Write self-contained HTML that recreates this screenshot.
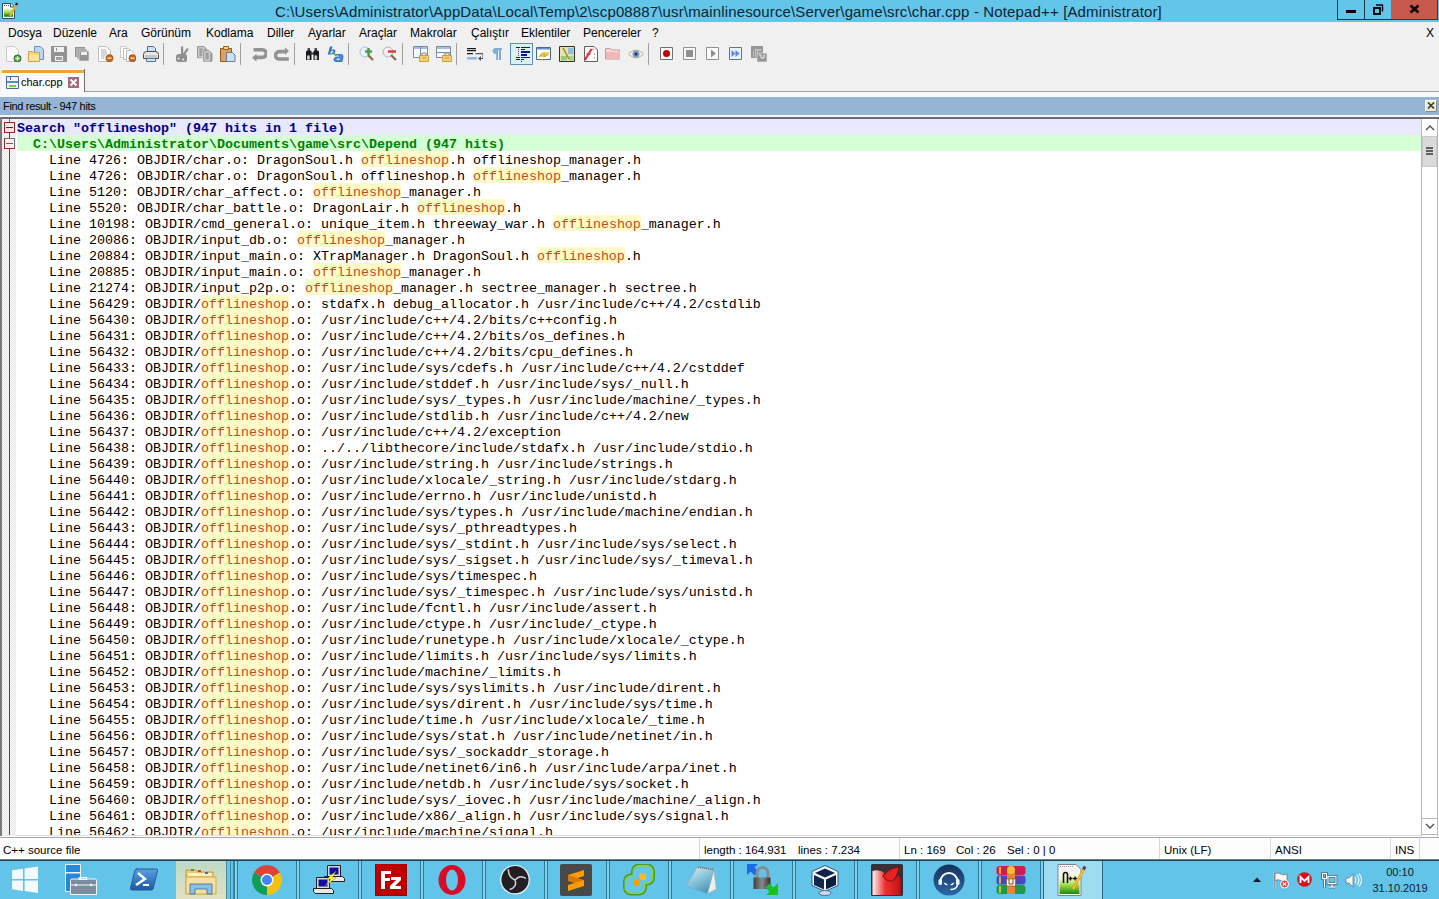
<!DOCTYPE html>
<html><head><meta charset="utf-8">
<style>
*{box-sizing:border-box}
html,body{margin:0;padding:0;width:1439px;height:899px;overflow:hidden;background:#f0f0f0;font-family:"Liberation Sans",sans-serif}
.a{position:absolute}
#title{left:0;top:0;width:1439px;height:22px;background:#63c6e9}
#ttext{left:275px;top:3px;font-size:15px;color:#0d2433;white-space:pre;letter-spacing:0.14px}
.menu{top:26px;font-size:12px;color:#000;white-space:pre}
#menubar{left:0;top:22px;width:1439px;height:21px;background:#f0f0f0}
.sep{width:1px;height:22px;top:43px;background:#a0a0a0}
.ic{top:46px;width:16px;height:16px}
#tabbar{left:0;top:66px;width:1439px;height:31px;background:#f0f0f0}
#findbar{left:0;top:97px;width:1439px;height:18px;background:#96b4d3}
#content{left:0;top:117px;width:1439px;height:720px;background:#fff;overflow:hidden}
#margin{left:2px;top:2px;width:14px;height:717px;background-color:#fafafa;background-image:linear-gradient(45deg,#e6e6e6 25%,transparent 25%,transparent 75%,#e6e6e6 75%),linear-gradient(45deg,#e6e6e6 25%,transparent 25%,transparent 75%,#e6e6e6 75%);background-size:2px 2px;background-position:0 0,1px 1px}
.ln{position:absolute;left:17px;height:16px;padding-top:2px;width:1404px;font-family:"Liberation Mono",monospace;font-size:13.333px;line-height:16px;white-space:pre;color:#000}
.hl{color:#c44a1c}
.hlb{width:88px;height:16px;background:#fffac6}
.sr{background:#e8e8ff;color:#000080;font-weight:bold}
.fl{background:#d5ffd5;color:#008000;font-weight:bold}
#status{left:0;top:836px;width:1439px;height:23px;background:#fdfdfd}
.st{top:844px;font-size:11.5px;color:#000;white-space:pre}
.ssep{top:838px;width:1px;height:21px;background:#d8d8d8}
#taskbar{left:0;top:859px;width:1439px;height:40px;background:#62c4e8;border-top:2px solid #24404e;border-top-color:#24404e}
.tb{top:860px;width:1px;height:39px;background:#8fd6ee}
</style></head><body>
<!-- Title bar -->
<div id="title" class="a"></div>
<div id="ttext" class="a">C:\Users\Administrator\AppData\Local\Temp\2\scp08887\usr\mainlinesource\Server\game\src\char.cpp - Notepad++ [Administrator]</div>

<svg class="a" style="left:0;top:0" width="22" height="22" viewBox="0 0 22 22"><defs><linearGradient id="tg" x1="0" y1="0" x2="0" y2="1"><stop offset="0" stop-color="#f0f8d8"/><stop offset=".5" stop-color="#9ad840"/><stop offset="1" stop-color="#106010"/></linearGradient></defs><path d="M2.5 3.5h8.5l3.5 3.5v11.5h-12z" fill="#fafcff" stroke="#304a60"/><path d="M4 8.5h9v8.2h-9z" fill="url(#tg)"/><path d="M4 5h1v1h-1zM6 5h1v1h-1zM8 5h1v1h-1z" fill="#505a60"/><path d="M10.5 3.5v3.5h3.5" fill="#fff" stroke="#304a60"/><path d="M10 16l6.5-11.5" stroke="#e0b030" stroke-width="2.4"/><path d="M16 5l1.2-2" stroke="#101830" stroke-width="2.4"/></svg>
<div class="a" style="left:1337px;top:0;width:28px;height:20px;border:1px solid #1a3a4a;border-top:0;background:#63c6e9"></div>
<div class="a" style="left:1346px;top:10px;width:10px;height:3px;background:#000"></div>
<div class="a" style="left:1365px;top:0;width:27px;height:20px;border:1px solid #1a3a4a;border-top:0;border-left:0;background:#63c6e9"></div>
<svg class="a" style="left:1373px;top:4px" width="11" height="11" viewBox="0 0 11 11"><path d="M3 1h6.5v6.5" fill="none" stroke="#000814" stroke-width="1.4"/><path d="M1 4h6v6h-6z" fill="none" stroke="#000814" stroke-width="2"/></svg>
<div class="a" style="left:1391px;top:0;width:47px;height:20px;border:1px solid #4a3030;border-top:0;border-left:0;background:#c75a4d"></div>
<svg class="a" style="left:1409px;top:4px" width="11" height="10" viewBox="0 0 11 10"><path d="M1.5 1.5l8 7M9.5 1.5l-8 7" stroke="#140808" stroke-width="2.8"/></svg>

<!-- Menubar -->
<div class="a menu" style="left:8px">Dosya</div>
<div class="a menu" style="left:53px">Düzenle</div>
<div class="a menu" style="left:109px">Ara</div>
<div class="a menu" style="left:141px">Görünüm</div>
<div class="a menu" style="left:206px">Kodlama</div>
<div class="a menu" style="left:267px">Diller</div>
<div class="a menu" style="left:308px">Ayarlar</div>
<div class="a menu" style="left:359px">Araçlar</div>
<div class="a menu" style="left:410px">Makrolar</div>
<div class="a menu" style="left:471px">Çalıştır</div>
<div class="a menu" style="left:521px">Eklentiler</div>
<div class="a menu" style="left:583px">Pencereler</div>
<div class="a menu" style="left:652px">?</div>
<div class="a menu" style="left:1426px">X</div>

<!-- TOOLBAR -->
<div class="a" style="left:510px;top:43px;width:23px;height:22px;background:#dcf0fb;border:1px solid #5a90b8"></div>
<svg class="a" style="left:6px;top:46px" width="16" height="16" viewBox="0 0 16 16"><path d="M0.5 0.5h8l4 4v11h-12z" fill="#fbfbfb" stroke="#c8c8c8"/><circle cx="11.5" cy="12.5" r="3.5" fill="#4f9a4a" stroke="#2f6a2a"/><path d="M11.5 10.2v4.6M9.2 12.5h4.6" stroke="#d8f0d0" stroke-width="1.4"/></svg>
<svg class="a" style="left:28px;top:46px" width="16" height="16" viewBox="0 0 16 16"><path d="M6.5 0.5h6l3 3v10h-9z" fill="#b9d8f8" stroke="#6a8cb8"/><path d="M0.5 5.5h4l1 1h6v9h-11z" fill="#f6d77a" stroke="#c8a050"/><path d="M1 9h10v6h-10z" fill="#fae39a"/></svg>
<svg class="a" style="left:51px;top:46px" width="16" height="16" viewBox="0 0 16 16"><path d="M0 0h16v16h-16z" fill="#939393"/><path d="M3 1h10v5h-10z" fill="#f2f2f2"/><path d="M5 2h1v3h-1z" fill="#939393"/><path d="M4 10h8v5h-8z" fill="#f0f0f0"/><path d="M5 11h6v3h-6z" fill="#a0a0a0"/></svg>
<svg class="a" style="left:75px;top:46px" width="16" height="16" viewBox="0 0 16 16"><path d="M0 1h10v10h-10z" fill="#939393"/><path d="M2 3h10v10h-10z" fill="#939393" stroke="#f0f0f0" stroke-width=".6"/><path d="M4 5h10v10h-10z" fill="#939393" stroke="#f0f0f0" stroke-width=".6"/><path d="M6 6h6v3h-6z" fill="#f2f2f2"/></svg>
<svg class="a" style="left:98px;top:46px" width="16" height="16" viewBox="0 0 16 16"><path d="M0.5 0.5h8l4 4v11h-12z" fill="#fdfdfd" stroke="#bdbdbd"/><path d="M3 4h5M3 6h6M3 8h6M3 10h4M3 12h3" stroke="#9a9a9a" stroke-width=".8"/><circle cx="11.5" cy="12.2" r="3.6" fill="#c4661c" stroke="#9a4a10" stroke-width=".6"/><path d="M9.5 12.2h4" stroke="#ffe0a0" stroke-width="1.5"/></svg>
<svg class="a" style="left:120px;top:46px" width="16" height="16" viewBox="0 0 16 16"><path d="M0.5 0.5h5l2 2v9h-7z" fill="#fdfdfd" stroke="#c8c8c8"/><path d="M3.5 2.5h5l2 2v9h-7z" fill="#fdfdfd" stroke="#c0c0c0"/><path d="M6.5 4.5h5l3 3v8h-8z" fill="#fdfdfd" stroke="#bbbbbb"/><circle cx="12.5" cy="12.2" r="3.6" fill="#c4661c" stroke="#9a4a10" stroke-width=".6"/><path d="M10.5 12.2h4" stroke="#ffe0a0" stroke-width="1.5"/></svg>
<svg class="a" style="left:143px;top:46px" width="16" height="16" viewBox="0 0 16 16"><path d="M4.5 0.5h6l2 2v5h-8z" fill="#c8e0f8" stroke="#5a6c80"/><path d="M0.5 8.5q0-3 3-3h9q3 0 3 3v4h-15z" fill="#e8e8e8" stroke="#4a4a4a"/><path d="M2 9h12v3h-12z" fill="#c8c8c8"/><path d="M3.5 12.5h9v3h-9z" fill="#c8e8f8" stroke="#5a7890"/></svg>
<svg class="a" style="left:175px;top:46px" width="16" height="16" viewBox="0 0 16 16"><path d="M6 0.5h2.2v8h-2.2z" fill="#8f8f8f"/><path d="M12 2l1.8 1.2-5.5 7.5-1.6-1.2z" fill="#8f8f8f"/><path d="M1 11q0-3 3-3h6q2 0 2 3v3q0 2-2 2h-7q-2 0-2-2z" fill="#8f8f8f"/><circle cx="3.6" cy="12.6" r="1" fill="#f0f0f0"/><circle cx="8.2" cy="13.6" r="1" fill="#f0f0f0"/></svg>
<svg class="a" style="left:197px;top:46px" width="16" height="16" viewBox="0 0 16 16"><path d="M0.5 0.5h6.5l3 3v8.2h-9.5z" fill="#a4a4a4" stroke="#9a9a9a"/><path d="M1.8 1.8h5v9h-5z" fill="#a0a0a0" stroke="#f4f4f4" stroke-width=".7"/><path d="M5.5 4h6.5l3.5 3.5v8.2h-10z" fill="#f4f4f4"/><path d="M6.5 4.5h5.5l3 3v7.7h-8.5z" fill="#a4a4a4" stroke="#9a9a9a"/><path d="M7.8 5.8h4.5v8.4h-4.5z" fill="#a0a0a0" stroke="#f4f4f4" stroke-width=".7"/></svg>
<svg class="a" style="left:220px;top:46px" width="16" height="16" viewBox="0 0 16 16"><path d="M0.5 2.5h11v13h-11z" fill="#e0a060" stroke="#8a5a20"/><path d="M3.5 0.5h5v3h-5z" fill="#f8d070" stroke="#8a6a20"/><path d="M6.5 6.5h6l2.5 2.5v6.5h-8.5z" fill="#c8e0f8" stroke="#6a7e98"/></svg>
<svg class="a" style="left:251px;top:46px" width="16" height="16" viewBox="0 0 16 16"><path d="M2.5 3.8H11.5A3.8 3.8 0 0 1 11.5 11.4H4.5" fill="none" stroke="#939393" stroke-width="3.6"/><path d="M1 11.8l4.5-4v8z" fill="#939393"/></svg>
<svg class="a" style="left:274px;top:46px" width="16" height="16" viewBox="0 0 16 16"><path d="M11.5 5.6H5.2A3.7 3.7 0 0 0 5.2 13H14.8" fill="none" stroke="#939393" stroke-width="3.6"/><path d="M15 5l-4-3.8v7.6z" fill="#939393"/></svg>
<svg class="a" style="left:305px;top:46px" width="16" height="16" viewBox="0 0 16 16"><path d="M2.5 2h2.5v3.5h-2.5zM9.5 2h2.5v3.5h-2.5z" fill="#4a4a50"/><path d="M1 6q0-1.5 1.5-1.5h3q1 0 1 1v8.5h-5.5z M8.5 5.5q0-1 1-1h3q1.5 0 1.5 1.5v8h-5.5z" fill="#18181c"/><path d="M5 6.5h4v2h-4z" fill="#30303a"/><path d="M2 9.5h2.8v4h-2.8zM9.5 9.5h2.8v4h-2.8z" fill="#b8b8b8"/><path d="M3.2 9.5v4M10.7 9.5v4" stroke="#e8e8e8" stroke-width=".8"/></svg>
<svg class="a" style="left:328px;top:46px" width="16" height="16" viewBox="0 0 16 16"><path d="M2 0.5h2.5l-1 3.5q2-1.5 3.3-.3t-.3 3.3q-1.5 1.5-3.8 1.5h-3z" fill="#3a70c0"/><path d="M3 5l-.8 2.6q1.8.2 2.8-.8t.5-1.8-2.5 0z" fill="#c8e8f8"/><path d="M4.5 6l4 4" stroke="#50a040" stroke-width="1.6"/><path d="M8 8.5h5q2.5 0 2 2.5l-1 4.5h-6q-2.5 0-2-2.5q.5-2 3-2h3" fill="#4a88d8" stroke="#2a68b8" stroke-width=".8"/><path d="M9 12.5h3l-.5 1.5h-3z" fill="#d0ecfc"/></svg>
<svg class="a" style="left:359px;top:46px" width="16" height="16" viewBox="0 0 16 16"><circle cx="6" cy="6" r="5" fill="#e8f2fa" stroke="#a8c0d8"/><path d="M9 9l5 5" stroke="#8a6a40" stroke-width="2.2"/><path d="M9.5 2v7M6 5.5h7" stroke="#4aa040" stroke-width="2.5"/></svg>
<svg class="a" style="left:382px;top:46px" width="16" height="16" viewBox="0 0 16 16"><circle cx="6" cy="6" r="5" fill="#f2eef2" stroke="#c0b0c0"/><path d="M9 9l5 5" stroke="#8a6a40" stroke-width="2.2"/><path d="M6 5.5h8" stroke="#d84040" stroke-width="2.5"/></svg>
<svg class="a" style="left:413px;top:46px" width="16" height="16" viewBox="0 0 16 16"><path d="M0.5 0.5h14v11h-14z" fill="#f8fbff" stroke="#7a8aa0"/><path d="M1 1h13v2h-13z" fill="#a8c0e0"/><path d="M7.5 1v10" stroke="#7a8aa0"/><path d="M8.5 9.5a2.5 2.5 0 0 1 5 0" fill="none" stroke="#a8a8a8" stroke-width="1.6"/><path d="M6.5 9.5h9v6h-9z" fill="#f4d070" stroke="#c8a040"/><path d="M9 12h4" stroke="#b89030" stroke-width=".8"/></svg>
<svg class="a" style="left:436px;top:46px" width="16" height="16" viewBox="0 0 16 16"><path d="M0.5 0.5h14v11h-14z" fill="#f8fbff" stroke="#7a8aa0"/><path d="M1 1h13v2h-13z" fill="#a8c0e0"/><path d="M1 6.5h13" stroke="#7a8aa0"/><path d="M8.5 9.5a2.5 2.5 0 0 1 5 0" fill="none" stroke="#a8a8a8" stroke-width="1.6"/><path d="M6.5 9.5h9v6h-9z" fill="#f4d070" stroke="#c8a040"/><path d="M9 12h4" stroke="#b89030" stroke-width=".8"/></svg>
<svg class="a" style="left:467px;top:46px" width="16" height="16" viewBox="0 0 16 16"><path d="M0 2h9v1.2h-9zM0 4h9v1.2h-9zM0 7h6v1.2h-6z" fill="#1a1a1a"/><path d="M8.5 7.6h7.5v4.9h-3" fill="none" stroke="#505868" stroke-width="1.1"/><path d="M11 12.5l3-2.6v5.2z" fill="#505868"/><path d="M0 11h10v2.6h-10z" fill="#90b8e0"/></svg>
<svg class="a" style="left:489px;top:46px" width="16" height="16" viewBox="0 0 16 16"><path d="M7.5 2h5.5v2h-1v10h-2v-10h-1v10h-1.8v-6a3 3 0 0 1 -1-6z" fill="#80acd8"/></svg>
<svg class="a" style="left:511px;top:44px" width="21" height="20" viewBox="0 0 21 20"><path d="M5 3h4v1h-4zM10 3h9v1h-9zM10 5h4v1h-4zM10 7h9v2h-9zM10 10h6v2h-6zM5 13h4v1h-4zM10 13h9v1h-9zM5 15h4v1h-4zM10 15h3v1h-3zM10 17h1v1h-1z" fill="#0a1888"/><path d="M7 5h1v1h-1zM7 7h1v1h-1zM7 9h1v1h-1zM7 11h1v1h-1z" fill="#8a3a60"/></svg>
<svg class="a" style="left:536px;top:46px" width="16" height="16" viewBox="0 0 16 16"><path d="M0.5 1.5h14v12h-14z" fill="#fdfdfd" stroke="#4a6890"/><path d="M1 2h13v1.5h-13z" fill="#6a90c8"/><path d="M2 11l4-5h8l-4 5z" fill="#ecd060"/><path d="M4 10l5-2 -1 3 5-3" fill="none" stroke="#c8a030" stroke-width=".8"/><path d="M6 13l1 2" stroke="#d8b040"/></svg>
<svg class="a" style="left:559px;top:46px" width="16" height="16" viewBox="0 0 16 16"><path d="M0.5 0.5h15v15h-15z" fill="#dfe8a8" stroke="#303030"/><path d="M9 2h5.5v6h-5.5z" fill="#90c0d8"/><path d="M2 10h6v4.5h-6z" fill="#98c878"/><path d="M10 10h4.5v4.5h-4.5z" fill="#a8d088"/><path d="M4 2l6 11" stroke="#b87838" stroke-width="1.5"/></svg>
<svg class="a" style="left:584px;top:46px" width="16" height="16" viewBox="0 0 16 16"><path d="M0.5 0.5h9.5l3.5 3.5v11.5h-13z" fill="#fdfdfd" stroke="#606060"/><path d="M7.5 3l-6.5 11" stroke="#d03848" stroke-width="2.2"/><path d="M2.5 8h4" stroke="#d03848" stroke-width="1.5"/><path d="M8.5 3.2q1-.6 1.5.5" stroke="#d03848" fill="none"/><path d="M10.5 7.5v1.5M10.5 11v1.5" stroke="#909090"/></svg>
<svg class="a" style="left:605px;top:46px" width="16" height="16" viewBox="0 0 16 16"><path d="M0.5 2.5h5l1 1.5h8v9h-14z" fill="#f8d8d8" stroke="#d09898"/><path d="M1 6h14v7h-14z" fill="#f0b8b8"/></svg>
<svg class="a" style="left:628px;top:46px" width="16" height="16" viewBox="0 0 16 16"><path d="M0.5 8q7.5-8 15 0q-7.5 8-15 0z" fill="#f4f4f4" stroke="#c0b090"/><circle cx="8" cy="8" r="3.5" fill="#7a9cc8"/><circle cx="8" cy="8" r="1.5" fill="#203050"/></svg>
<svg class="a" style="left:659px;top:46px" width="16" height="16" viewBox="0 0 16 16"><path d="M1.5 1.5h12v12h-12z" fill="#fafafa" stroke="#707070"/><circle cx="7.5" cy="7.5" r="3.5" fill="#c00000"/></svg>
<svg class="a" style="left:682px;top:46px" width="16" height="16" viewBox="0 0 16 16"><path d="M1.5 1.5h12v12h-12z" fill="#fafafa" stroke="#909090"/><path d="M4 4h7v7h-7z" fill="#909090"/></svg>
<svg class="a" style="left:705px;top:46px" width="16" height="16" viewBox="0 0 16 16"><path d="M1.5 1.5h12v12h-12z" fill="#fafafa" stroke="#909090"/><path d="M6 3.5l5 4-5 4z" fill="#909090"/></svg>
<svg class="a" style="left:728px;top:46px" width="16" height="16" viewBox="0 0 16 16"><path d="M1.5 1.5h12v12h-12z" fill="#e8f2fc" stroke="#707080"/><path d="M3.5 4l4 3.5-4 3.5zM7.5 4l4 3.5-4 3.5z" fill="#5a8ad8"/></svg>
<svg class="a" style="left:751px;top:46px" width="16" height="16" viewBox="0 0 16 16"><path d="M0 0h12v12h-12z" fill="#969696"/><path d="M3.5 4h7M2 6h1M4 6h1M6 6h1M2 8h1M4 8h1M2 10h1M4 10h1" stroke="#e8e8e8"/><path d="M6 7h10v9h-10z" fill="#969696" stroke="#f0f0f0" stroke-width=".6"/><path d="M8 9h2v3h3M14 9h-1v3" stroke="#f0f0f0" fill="none"/></svg>
<div class="a" style="left:163px;top:43px;width:1px;height:22px;background:#a0a0a0"></div>
<div class="a" style="left:240px;top:43px;width:1px;height:22px;background:#a0a0a0"></div>
<div class="a" style="left:294px;top:43px;width:1px;height:22px;background:#a0a0a0"></div>
<div class="a" style="left:348px;top:43px;width:1px;height:22px;background:#a0a0a0"></div>
<div class="a" style="left:402px;top:43px;width:1px;height:22px;background:#a0a0a0"></div>
<div class="a" style="left:456px;top:43px;width:1px;height:22px;background:#a0a0a0"></div>
<div class="a" style="left:648px;top:43px;width:1px;height:22px;background:#a0a0a0"></div>

<!-- Tab bar -->
<div class="a" style="left:85px;top:91px;width:1354px;height:1px;background:#a0a0a0"></div>
<div class="a" style="left:1px;top:69px;width:84px;height:23px;background:#fafafa;border-right:1px solid #707070"></div>
<div class="a" style="left:2px;top:70px;width:82px;height:3px;background:#f2a23a"></div>
<div class="a" style="left:0;top:92px;width:1439px;height:5px;background:#f8f9fb"></div>
<svg class="a" style="left:6px;top:76px" width="13" height="13" viewBox="0 0 13 13"><path d="M0.5 0.5h12v12h-12z" fill="#f0f6fc" stroke="#4a6c9c"/><path d="M1 5h11v2h-11z" fill="#5a8ac8"/><path d="M3 9h7v2h-7z" fill="#8ac060"/><path d="M4 1h1v3h-1z" fill="#4a6c9c"/></svg>
<div class="a" style="left:21px;top:76px;font-size:11px;color:#000;white-space:pre">char.cpp</div>
<svg class="a" style="left:68px;top:77px" width="11" height="11" viewBox="0 0 11 11"><path d="M0 0h11v11h-11z" fill="#a46a7c"/><path d="M2.5 2.5l6 6M8.5 2.5l-6 6" stroke="#fff" stroke-width="1.8"/></svg>


<!-- Find result bar -->
<div id="findbar" class="a"></div>
<div class="a" style="left:3px;top:100px;font-size:11px;letter-spacing:-0.33px;color:#000;white-space:pre">Find result - 947 hits</div>

<div class="a" style="left:1425px;top:100px;width:12px;height:12px;background:#ece9d8;border:1px solid #fff;border-right-color:#8a8a80;border-bottom-color:#8a8a80"></div>
<svg class="a" style="left:1427px;top:102px" width="8" height="7" viewBox="0 0 8 7"><path d="M1 0.5l6 6M7 0.5l-6 6" stroke="#3a3a28" stroke-width="1.6"/></svg>
<div class="a" style="left:0;top:115px;width:1439px;height:2px;background:#f8f8f8"></div>

<!-- Content -->
<div id="content" class="a">
<div class="a" style="left:0;top:0;width:1439px;height:2px;background:#6a6a74"></div>
<div class="a" style="left:0;top:0;width:2px;height:720px;background:#7a7a7a"></div>
<div id="margin" class="a"></div>
<div class="ln sr" style="top:2px">Search "offlineshop" (947 hits in 1 file)</div>
<div class="ln fl" style="top:18px">  C:\Users\Administrator\Documents\game\src\Depend (947 hits)</div>
<div class="a hlb" style="left:361px;top:34px"></div>
<div class="ln" style="top:34px">    Line 4726: OBJDIR/char.o: DragonSoul.h <span class="hl">offlineshop</span>.h offlineshop_manager.h</div>
<div class="a hlb" style="left:473px;top:50px"></div>
<div class="ln" style="top:50px">    Line 4726: OBJDIR/char.o: DragonSoul.h offlineshop.h <span class="hl">offlineshop</span>_manager.h</div>
<div class="a hlb" style="left:313px;top:66px"></div>
<div class="ln" style="top:66px">    Line 5120: OBJDIR/char_affect.o: <span class="hl">offlineshop</span>_manager.h</div>
<div class="a hlb" style="left:417px;top:82px"></div>
<div class="ln" style="top:82px">    Line 5520: OBJDIR/char_battle.o: DragonLair.h <span class="hl">offlineshop</span>.h</div>
<div class="a hlb" style="left:553px;top:98px"></div>
<div class="ln" style="top:98px">    Line 10198: OBJDIR/cmd_general.o: unique_item.h threeway_war.h <span class="hl">offlineshop</span>_manager.h</div>
<div class="a hlb" style="left:297px;top:114px"></div>
<div class="ln" style="top:114px">    Line 20086: OBJDIR/input_db.o: <span class="hl">offlineshop</span>_manager.h</div>
<div class="a hlb" style="left:537px;top:130px"></div>
<div class="ln" style="top:130px">    Line 20884: OBJDIR/input_main.o: XTrapManager.h DragonSoul.h <span class="hl">offlineshop</span>.h</div>
<div class="a hlb" style="left:313px;top:146px"></div>
<div class="ln" style="top:146px">    Line 20885: OBJDIR/input_main.o: <span class="hl">offlineshop</span>_manager.h</div>
<div class="a hlb" style="left:305px;top:162px"></div>
<div class="ln" style="top:162px">    Line 21274: OBJDIR/input_p2p.o: <span class="hl">offlineshop</span>_manager.h sectree_manager.h sectree.h</div>
<div class="a hlb" style="left:201px;top:178px"></div>
<div class="ln" style="top:178px">    Line 56429: OBJDIR/<span class="hl">offlineshop</span>.o: stdafx.h debug_allocator.h /usr/include/c++/4.2/cstdlib</div>
<div class="a hlb" style="left:201px;top:194px"></div>
<div class="ln" style="top:194px">    Line 56430: OBJDIR/<span class="hl">offlineshop</span>.o: /usr/include/c++/4.2/bits/c++config.h</div>
<div class="a hlb" style="left:201px;top:210px"></div>
<div class="ln" style="top:210px">    Line 56431: OBJDIR/<span class="hl">offlineshop</span>.o: /usr/include/c++/4.2/bits/os_defines.h</div>
<div class="a hlb" style="left:201px;top:226px"></div>
<div class="ln" style="top:226px">    Line 56432: OBJDIR/<span class="hl">offlineshop</span>.o: /usr/include/c++/4.2/bits/cpu_defines.h</div>
<div class="a hlb" style="left:201px;top:242px"></div>
<div class="ln" style="top:242px">    Line 56433: OBJDIR/<span class="hl">offlineshop</span>.o: /usr/include/sys/cdefs.h /usr/include/c++/4.2/cstddef</div>
<div class="a hlb" style="left:201px;top:258px"></div>
<div class="ln" style="top:258px">    Line 56434: OBJDIR/<span class="hl">offlineshop</span>.o: /usr/include/stddef.h /usr/include/sys/_null.h</div>
<div class="a hlb" style="left:201px;top:274px"></div>
<div class="ln" style="top:274px">    Line 56435: OBJDIR/<span class="hl">offlineshop</span>.o: /usr/include/sys/_types.h /usr/include/machine/_types.h</div>
<div class="a hlb" style="left:201px;top:290px"></div>
<div class="ln" style="top:290px">    Line 56436: OBJDIR/<span class="hl">offlineshop</span>.o: /usr/include/stdlib.h /usr/include/c++/4.2/new</div>
<div class="a hlb" style="left:201px;top:306px"></div>
<div class="ln" style="top:306px">    Line 56437: OBJDIR/<span class="hl">offlineshop</span>.o: /usr/include/c++/4.2/exception</div>
<div class="a hlb" style="left:201px;top:322px"></div>
<div class="ln" style="top:322px">    Line 56438: OBJDIR/<span class="hl">offlineshop</span>.o: ../../libthecore/include/stdafx.h /usr/include/stdio.h</div>
<div class="a hlb" style="left:201px;top:338px"></div>
<div class="ln" style="top:338px">    Line 56439: OBJDIR/<span class="hl">offlineshop</span>.o: /usr/include/string.h /usr/include/strings.h</div>
<div class="a hlb" style="left:201px;top:354px"></div>
<div class="ln" style="top:354px">    Line 56440: OBJDIR/<span class="hl">offlineshop</span>.o: /usr/include/xlocale/_string.h /usr/include/stdarg.h</div>
<div class="a hlb" style="left:201px;top:370px"></div>
<div class="ln" style="top:370px">    Line 56441: OBJDIR/<span class="hl">offlineshop</span>.o: /usr/include/errno.h /usr/include/unistd.h</div>
<div class="a hlb" style="left:201px;top:386px"></div>
<div class="ln" style="top:386px">    Line 56442: OBJDIR/<span class="hl">offlineshop</span>.o: /usr/include/sys/types.h /usr/include/machine/endian.h</div>
<div class="a hlb" style="left:201px;top:402px"></div>
<div class="ln" style="top:402px">    Line 56443: OBJDIR/<span class="hl">offlineshop</span>.o: /usr/include/sys/_pthreadtypes.h</div>
<div class="a hlb" style="left:201px;top:418px"></div>
<div class="ln" style="top:418px">    Line 56444: OBJDIR/<span class="hl">offlineshop</span>.o: /usr/include/sys/_stdint.h /usr/include/sys/select.h</div>
<div class="a hlb" style="left:201px;top:434px"></div>
<div class="ln" style="top:434px">    Line 56445: OBJDIR/<span class="hl">offlineshop</span>.o: /usr/include/sys/_sigset.h /usr/include/sys/_timeval.h</div>
<div class="a hlb" style="left:201px;top:450px"></div>
<div class="ln" style="top:450px">    Line 56446: OBJDIR/<span class="hl">offlineshop</span>.o: /usr/include/sys/timespec.h</div>
<div class="a hlb" style="left:201px;top:466px"></div>
<div class="ln" style="top:466px">    Line 56447: OBJDIR/<span class="hl">offlineshop</span>.o: /usr/include/sys/_timespec.h /usr/include/sys/unistd.h</div>
<div class="a hlb" style="left:201px;top:482px"></div>
<div class="ln" style="top:482px">    Line 56448: OBJDIR/<span class="hl">offlineshop</span>.o: /usr/include/fcntl.h /usr/include/assert.h</div>
<div class="a hlb" style="left:201px;top:498px"></div>
<div class="ln" style="top:498px">    Line 56449: OBJDIR/<span class="hl">offlineshop</span>.o: /usr/include/ctype.h /usr/include/_ctype.h</div>
<div class="a hlb" style="left:201px;top:514px"></div>
<div class="ln" style="top:514px">    Line 56450: OBJDIR/<span class="hl">offlineshop</span>.o: /usr/include/runetype.h /usr/include/xlocale/_ctype.h</div>
<div class="a hlb" style="left:201px;top:530px"></div>
<div class="ln" style="top:530px">    Line 56451: OBJDIR/<span class="hl">offlineshop</span>.o: /usr/include/limits.h /usr/include/sys/limits.h</div>
<div class="a hlb" style="left:201px;top:546px"></div>
<div class="ln" style="top:546px">    Line 56452: OBJDIR/<span class="hl">offlineshop</span>.o: /usr/include/machine/_limits.h</div>
<div class="a hlb" style="left:201px;top:562px"></div>
<div class="ln" style="top:562px">    Line 56453: OBJDIR/<span class="hl">offlineshop</span>.o: /usr/include/sys/syslimits.h /usr/include/dirent.h</div>
<div class="a hlb" style="left:201px;top:578px"></div>
<div class="ln" style="top:578px">    Line 56454: OBJDIR/<span class="hl">offlineshop</span>.o: /usr/include/sys/dirent.h /usr/include/sys/time.h</div>
<div class="a hlb" style="left:201px;top:594px"></div>
<div class="ln" style="top:594px">    Line 56455: OBJDIR/<span class="hl">offlineshop</span>.o: /usr/include/time.h /usr/include/xlocale/_time.h</div>
<div class="a hlb" style="left:201px;top:610px"></div>
<div class="ln" style="top:610px">    Line 56456: OBJDIR/<span class="hl">offlineshop</span>.o: /usr/include/sys/stat.h /usr/include/netinet/in.h</div>
<div class="a hlb" style="left:201px;top:626px"></div>
<div class="ln" style="top:626px">    Line 56457: OBJDIR/<span class="hl">offlineshop</span>.o: /usr/include/sys/_sockaddr_storage.h</div>
<div class="a hlb" style="left:201px;top:642px"></div>
<div class="ln" style="top:642px">    Line 56458: OBJDIR/<span class="hl">offlineshop</span>.o: /usr/include/netinet6/in6.h /usr/include/arpa/inet.h</div>
<div class="a hlb" style="left:201px;top:658px"></div>
<div class="ln" style="top:658px">    Line 56459: OBJDIR/<span class="hl">offlineshop</span>.o: /usr/include/netdb.h /usr/include/sys/socket.h</div>
<div class="a hlb" style="left:201px;top:674px"></div>
<div class="ln" style="top:674px">    Line 56460: OBJDIR/<span class="hl">offlineshop</span>.o: /usr/include/sys/_iovec.h /usr/include/machine/_align.h</div>
<div class="a hlb" style="left:201px;top:690px"></div>
<div class="ln" style="top:690px">    Line 56461: OBJDIR/<span class="hl">offlineshop</span>.o: /usr/include/x86/_align.h /usr/include/sys/signal.h</div>
<div class="a hlb" style="left:201px;top:706px"></div>
<div class="ln" style="top:706px">    Line 56462: OBJDIR/<span class="hl">offlineshop</span>.o: /usr/include/machine/signal.h</div>
<div class="a" style="left:9px;top:2px;width:1px;height:3px;background:#9a6060"></div>
<div class="a" style="left:4px;top:5px;width:11px;height:11px;background:#ffe2e2;border:1px solid #8a2a2a"></div>
<div class="a" style="left:6px;top:10px;width:7px;height:1px;background:#6a2020"></div>
<div class="a" style="left:9px;top:16px;width:1px;height:5px;background:#8a2a2a"></div>
<div class="a" style="left:4px;top:21px;width:11px;height:11px;background:#fdf0f0;border:1px solid #8a2a2a;border-top-color:#707070;border-right-color:#707070"></div>
<div class="a" style="left:6px;top:26px;width:7px;height:1px;background:#606060"></div>
<div class="a" style="left:9px;top:32px;width:1px;height:686px;background:#8a3030"></div>
<div class="a" style="left:16px;top:718px;width:1405px;height:1px;background:#e0e0e0"></div>

<div class="a" style="left:1421px;top:2px;width:17px;height:717px;background:#fff;border-left:1px solid #b8b8b8;border-right:1px solid #b8b8b8"></div>
<svg class="a" style="left:1425px;top:8px" width="10" height="6" viewBox="0 0 10 6"><path d="M1 5l4-4 4 4" fill="none" stroke="#505050" stroke-width="1.4"/></svg>
<div class="a" style="left:1422px;top:19px;width:15px;height:31px;background:#dadada;border:1px solid #c8c8c8"></div>
<div class="a" style="left:1426px;top:30px;width:7px;height:2px;background:#606060"></div>
<div class="a" style="left:1426px;top:33px;width:7px;height:2px;background:#606060"></div>
<div class="a" style="left:1426px;top:36px;width:7px;height:2px;background:#606060"></div>
<div class="a" style="left:1422px;top:701px;width:15px;height:1px;background:#b8b8b8"></div>
<div class="a" style="left:1422px;top:717px;width:15px;height:1px;background:#b8b8b8"></div>
<svg class="a" style="left:1425px;top:706px" width="10" height="6" viewBox="0 0 10 6"><path d="M1 1l4 4 4-4" fill="none" stroke="#505050" stroke-width="1.4"/></svg>

</div>

<!-- Status bar -->
<div id="status" class="a"></div>
<div class="a" style="left:0;top:837px;width:1439px;height:1px;background:#a8a8a8"></div>
<div class="a st" style="left:3px">C++ source file</div>
<div class="a ssep" style="left:699px"></div>
<div class="a st" style="left:704px">length : 164.931</div>
<div class="a st" style="left:798px">lines : 7.234</div>
<div class="a ssep" style="left:899px"></div>
<div class="a st" style="left:904px">Ln : 169</div>
<div class="a st" style="left:956px">Col : 26</div>
<div class="a st" style="left:1007px">Sel : 0 | 0</div>
<div class="a ssep" style="left:1159px"></div>
<div class="a st" style="left:1164px">Unix (LF)</div>
<div class="a ssep" style="left:1270px"></div>
<div class="a st" style="left:1275px">ANSI</div>
<div class="a ssep" style="left:1390px"></div>
<div class="a st" style="left:1395px">INS</div>
<div class="a ssep" style="left:1419px"></div>


<!-- Taskbar -->
<div id="taskbar" class="a"></div>
<div class="a" style="left:0;top:859px;width:1439px;height:1px;background:#6a8088"></div>
<svg class="a" style="left:11px;top:866px" width="28" height="28" viewBox="0 0 28 28"><path d="M1 4.3l11-1.6v10.3h-11z M13.6 2.5l13.4-2v12.5h-13.4z M1 14.6h11v10.3l-11-1.6z M13.6 14.6h13.4v12.5l-13.4-2z" fill="#f4fbff"/></svg>
<svg class="a" style="left:65px;top:864px" width="32" height="32" viewBox="0 0 32 32"><path d="M0.5 0.5h15v27h-15z" fill="#2a86d8" stroke="#e8f4ff"/><path d="M1 8h14v1.5h-14z" fill="#e8f4ff"/><path d="M5.5 16.5q0-1.5 1.5-1.5h23q1.5 0 1.5 1.5v14h-26z" fill="#7a8ca0" stroke="#f0f8ff"/><path d="M14 13.5h8v2h-8z" fill="none" stroke="#f0f8ff"/><path d="M6 21h25" stroke="#f0f8ff"/><circle cx="11" cy="21" r="1.3" fill="#f0f8ff"/><circle cx="26" cy="21" r="1.3" fill="#f0f8ff"/></svg>
<svg class="a" style="left:130px;top:868px" width="28" height="24" viewBox="0 0 28 24"><defs><linearGradient id="ps" x1="0" y1="0" x2="0" y2="1"><stop offset="0" stop-color="#5aa0e0"/><stop offset="1" stop-color="#1a5aa8"/></linearGradient></defs><path d="M6 1h20q2 0 1.5 2l-4.5 18q-.5 1-2 1h-19q-2 0-1.5-2l4.5-18q.5-1 2-1z" fill="url(#ps)" stroke="#2a5a90"/><path d="M8 5l7 6-9 6" fill="none" stroke="#fff" stroke-width="2.4"/><path d="M13 17h6" stroke="#fff" stroke-width="2"/></svg>
<div class="a" style="left:175px;top:861px;width:52px;height:38px;background:linear-gradient(#bcdac8,#e2e2c2);border-left:1px solid #8ab8b8;border-right:1px solid #4a8aa0"></div>
<svg class="a" style="left:185px;top:866px" width="32" height="32" viewBox="0 0 32 32"><path d="M1 4h10l2 2h15v22h-27z" fill="#e8c870" stroke="#c8a048"/><path d="M3 7h24v3h-24z" fill="#fbf0c0"/><path d="M6 3h3v2h-3z" fill="#3aa040"/><path d="M13 4h3v2h-3z" fill="#d04030"/><path d="M20 6h3v2h-3z" fill="#3a70c0"/><path d="M1 11h30v17h-30z" fill="#f8e0a0" stroke="#d0a850"/><path d="M5 18h22v10h-5v-5h-12v5h-5z" fill="#8ac0e0" stroke="#4a80b0"/></svg>
<div class="a" style="left:230px;top:861px;width:1px;height:38px;background:#3a8aa8"></div>
<div class="a" style="left:233px;top:861px;width:1px;height:38px;background:#3a8aa8"></div>
<div class="a" style="left:234px;top:861px;width:4px;height:38px;background:#84d2ec;border-left:1px solid #2e7898;border-right:1px solid #2e7898"></div>
<div class="a" style="left:296px;top:861px;width:4px;height:38px;background:#84d2ec;border-left:1px solid #2e7898;border-right:1px solid #2e7898"></div>
<div class="a" style="left:358px;top:861px;width:4px;height:38px;background:#84d2ec;border-left:1px solid #2e7898;border-right:1px solid #2e7898"></div>
<div class="a" style="left:420px;top:861px;width:4px;height:38px;background:#84d2ec;border-left:1px solid #2e7898;border-right:1px solid #2e7898"></div>
<div class="a" style="left:482px;top:861px;width:4px;height:38px;background:#84d2ec;border-left:1px solid #2e7898;border-right:1px solid #2e7898"></div>
<div class="a" style="left:544px;top:861px;width:4px;height:38px;background:#84d2ec;border-left:1px solid #2e7898;border-right:1px solid #2e7898"></div>
<div class="a" style="left:606px;top:861px;width:4px;height:38px;background:#84d2ec;border-left:1px solid #2e7898;border-right:1px solid #2e7898"></div>
<div class="a" style="left:668px;top:861px;width:4px;height:38px;background:#84d2ec;border-left:1px solid #2e7898;border-right:1px solid #2e7898"></div>
<div class="a" style="left:730px;top:861px;width:4px;height:38px;background:#84d2ec;border-left:1px solid #2e7898;border-right:1px solid #2e7898"></div>
<div class="a" style="left:792px;top:861px;width:4px;height:38px;background:#84d2ec;border-left:1px solid #2e7898;border-right:1px solid #2e7898"></div>
<div class="a" style="left:854px;top:861px;width:4px;height:38px;background:#84d2ec;border-left:1px solid #2e7898;border-right:1px solid #2e7898"></div>
<div class="a" style="left:916px;top:861px;width:4px;height:38px;background:#84d2ec;border-left:1px solid #2e7898;border-right:1px solid #2e7898"></div>
<div class="a" style="left:978px;top:861px;width:4px;height:38px;background:#84d2ec;border-left:1px solid #2e7898;border-right:1px solid #2e7898"></div>
<div class="a" style="left:1040px;top:861px;width:4px;height:38px;background:#84d2ec;border-left:1px solid #2e7898;border-right:1px solid #2e7898"></div>
<div class="a" style="left:1043px;top:861px;width:60px;height:38px;background:#9edcf2;border-left:1px solid #2a6a88;border-right:1px solid #2a6a88"></div>
<svg class="a" style="left:251px;top:864px" width="32" height="32" viewBox="0 0 32 32"><path d="M16 16L3.01 8.5A15 15 0 0 1 28.99 8.5z" fill="#db4437"/><path d="M16 16L28.99 8.5A15 15 0 0 1 16 31z" fill="#f4c20d"/><path d="M16 16L16 31A15 15 0 0 1 3.01 8.5z" fill="#0f9d58"/><circle cx="16" cy="16" r="6.5" fill="#fff"/><circle cx="16" cy="16" r="5" fill="#4285f4"/></svg>
<svg class="a" style="left:313px;top:864px" width="32" height="32" viewBox="0 0 32 32"><path d="M14.5 1.5h13v11h-13z" fill="#d8d8d8" stroke="#202020"/><path d="M16.5 3.5h9v7h-9z" fill="#1010a0"/><path d="M11.5 12.5h18l2 2v3h-18l-2-2z" fill="#e8e8e8" stroke="#202020"/><path d="M3.5 13.5h13v11h-13z" fill="#d8d8d8" stroke="#202020"/><path d="M5.5 15.5h9v7h-9z" fill="#1010a0"/><path d="M0.5 24.5h18l2 2v3h-18l-2-2z" fill="#e8e8e8" stroke="#202020"/><path d="M23 7l-9 8h4l-6 7 11-8h-4z" fill="#ffff40" stroke="#a08000" stroke-width=".4"/></svg>
<svg class="a" style="left:375px;top:864px" width="32" height="32" viewBox="0 0 32 32"><path d="M0 0h32v32h-32z" fill="#bf0000"/><path d="M0 0h32v32h-32z" fill="none" stroke="#600000" stroke-dasharray="1 1"/><path d="M6 7h10v3h-6v4h5v3h-5v8h-4z" fill="#fff"/><path d="M16 13h10v3l-6 6h6v3h-11v-3l6-6h-5z" fill="#fff"/></svg>
<svg class="a" style="left:437px;top:864px" width="30" height="32" viewBox="0 0 30 32"><ellipse cx="15" cy="16" rx="13.5" ry="15" fill="#d80c24"/><ellipse cx="15" cy="16" rx="6" ry="10.5" fill="#62c6e8"/></svg>
<svg class="a" style="left:499px;top:864px" width="32" height="32" viewBox="0 0 32 32"><circle cx="16" cy="15.7" r="14.8" fill="#e8f6fa"/><circle cx="16" cy="15.7" r="13.6" fill="#221e22"/><path d="M16 16Q9 13 9.4 5.3M16 16Q21 10.5 27 14.5M16 16Q18.5 23 10.6 25.6" fill="none" stroke="#d8d0d8" stroke-width="1.5"/></svg>
<svg class="a" style="left:560px;top:864px" width="32" height="32" viewBox="0 0 32 32"><rect x="0" y="0" width="32" height="32" rx="2" fill="#484848"/><path d="M8 11l16-5v6l-16 5z" fill="#ff9d00"/><path d="M8 11l16 5v6l-16-5z" fill="#d87800"/><path d="M8 21l16-5v6l-16 5z" fill="#ff9d00"/></svg>
<svg class="a" style="left:623px;top:864px" width="32" height="32" viewBox="0 0 32 32"><rect x="11" y="2.5" width="18" height="16" rx="5" fill="none" stroke="#4a9a28" stroke-width="6"/><rect x="3" y="12.5" width="18" height="16" rx="5" fill="none" stroke="#4a9a28" stroke-width="6"/><rect x="11" y="2.5" width="18" height="16" rx="5" fill="none" stroke="#8ad040" stroke-width="3"/><rect x="3" y="12.5" width="18" height="16" rx="5" fill="none" stroke="#8ad040" stroke-width="3"/><rect x="11" y="2.5" width="18" height="16" rx="5" fill="#62c6e8"/><rect x="3" y="12.5" width="18" height="16" rx="5" fill="#62c6e8"/><path d="M10 15h6.5v6.5h-6.5z" fill="#f8a000"/><path d="M16.5 9.5h6.5v6.5h-6.5z" fill="#ffb820"/></svg>
<svg class="a" style="left:685px;top:864px" width="32" height="32" viewBox="0 0 32 32"><defs><linearGradient id="npd" x1="0" y1="0" x2="0.6" y2="1"><stop offset="0" stop-color="#e8f4f8"/><stop offset=".5" stop-color="#90c8dc"/><stop offset="1" stop-color="#4a98b8"/></linearGradient></defs><path d="M28.8 5.5l2.5 19.5-9 4.7z" fill="#f0f0ea" stroke="#a8a8a0" stroke-width=".6"/><path d="M12.3 3l16.5 2.5-6.5 24.2-21.3-7.7z" fill="url(#npd)" stroke="#7aa8c0" stroke-width=".6"/><path d="M13 3.2l15.5 2.3" stroke="#707070" stroke-width="1.6" stroke-dasharray="1 1"/></svg>
<svg class="a" style="left:747px;top:864px" width="32" height="32" viewBox="0 0 32 32"><defs><linearGradient id="lk" x1="0" y1="0" x2="1" y2="0"><stop offset="0" stop-color="#404040"/><stop offset=".5" stop-color="#8a8a8a"/><stop offset="1" stop-color="#303030"/></linearGradient></defs><path d="M0 11V0h11l-3.5 3.5 4 4-4 4-4-4z" fill="#1a6ae8"/><path d="M10 14v-5a5.5 5.5 0 0 1 11 0v5" fill="none" stroke="#8a8a8a" stroke-width="3"/><path d="M6.5 13.5h17v11.5h-17z" fill="url(#lk)"/><path d="M31 19v12h-12l3.5-3.5-4-4 4-4 4 4z" fill="#18c020"/></svg>
<svg class="a" style="left:809px;top:864px" width="32" height="32" viewBox="0 0 32 32"><path d="M16 1.5l13 6v14l-13 6-13-6v-14z" fill="#f4f8fc" stroke="#3a5a8a" stroke-width="1"/><path d="M16 4.5l10 4.5-10 4.5-10-4.5z" fill="#0e2248"/><path d="M5 11l10 4.5v10l-10-4.5z" fill="#12284e"/><path d="M17 15.5l10-4.5v10l-10 4.5z" fill="#0c1e40"/><ellipse cx="16" cy="29" rx="6" ry="2.5" fill="#d0d8e8" stroke="#3a5a8a" stroke-width=".8"/></svg>
<svg class="a" style="left:871px;top:864px" width="32" height="32" viewBox="0 0 32 32"><defs><linearGradient id="ra" x1="0" y1="0" x2="1" y2="0"><stop offset="0" stop-color="#fff0f0"/><stop offset=".45" stop-color="#f03030"/><stop offset="1" stop-color="#c81010"/></linearGradient></defs><rect x="0" y="0" width="32" height="32" rx="1.5" fill="#383038"/><path d="M1.5 7q7-2 12 2l-2 3q4 6 11 5l5-6q2 3 2 6v14h-28z" fill="url(#ra)"/><path d="M12 12q6-8 16-9q-1 8-6 14q-7 1-10-5z" fill="#e82020" stroke="#701010" stroke-width=".8"/></svg>
<svg class="a" style="left:933px;top:864px" width="32" height="32" viewBox="0 0 32 32"><defs><linearGradient id="tsg" x1="0" y1="0" x2="0" y2="1"><stop offset="0" stop-color="#16305a"/><stop offset="1" stop-color="#2a68ac"/></linearGradient></defs><circle cx="16" cy="16" r="15.5" fill="url(#tsg)"/><path d="M7.5 17.5a8.5 8.5 0 0 1 17 0" fill="none" stroke="#f4f8fc" stroke-width="2"/><rect x="5.5" y="15" width="3.5" height="6" rx="1.5" fill="#f4f8fc"/><rect x="23" y="15" width="3.5" height="6" rx="1.5" fill="#f4f8fc"/><path d="M10.5 18.5q3 0 4.5 2.5q-3 1-4.5-2.5zM21.5 18.5q-3 0-4.5 2.5q3 1 4.5-2.5z" fill="#f4f8fc"/><path d="M24.5 21q-1 4.5-7 4.5" fill="none" stroke="#f4f8fc" stroke-width="1.6"/></svg>
<svg class="a" style="left:995px;top:864px" width="32" height="32" viewBox="0 0 32 32"><rect x="1.5" y="2" width="29" height="9" rx="3" fill="#c8204a"/><rect x="1.5" y="11.5" width="29" height="9" rx="3" fill="#4848b8"/><rect x="1.5" y="21" width="29" height="9" rx="3" fill="#209848"/><path d="M5 3v7M5 12.5v7M5 22v7" stroke="#f0d040" stroke-width="1.6"/><path d="M12 5h8v25h-8z" fill="#e08a30"/><path d="M11.5 15h9v7h-9z" fill="#fff4e0" stroke="#805020" stroke-width=".6"/><path d="M14 15v5h4v-5" fill="none" stroke="#805020" stroke-width="1"/><ellipse cx="16" cy="6" rx="4" ry="4" fill="#f0c030"/></svg>
<svg class="a" style="left:1057px;top:864px" width="32" height="32" viewBox="0 0 32 32"><defs><linearGradient id="npg" x1="0" y1="0" x2="0" y2="1"><stop offset="0" stop-color="#fafcf0"/><stop offset=".35" stop-color="#e8f4c0"/><stop offset=".6" stop-color="#9ada40"/><stop offset="1" stop-color="#1a8a10"/></linearGradient></defs><path d="M1 0.5h18l5 5v26h-23z" fill="#fbfbfb" stroke="#7a8090"/><path d="M2.5 8h20v22h-20z" fill="url(#npg)"/><path d="M3 2.5h14" stroke="#909090" stroke-dasharray="1 1"/><path d="M3 5h17M3 7h19" stroke="#d8d8e0" stroke-width=".6"/><path d="M6.5 19v-8.5a2 2 0 0 1 4 0v8.5" fill="none" stroke="#101010" stroke-width="1.6"/><path d="M11.5 14.5h4M13.5 12.5v4M16 14.5h4M18 12.5v4" stroke="#101010" stroke-width="1.3"/><path d="M16 25l11-20" stroke="#e0a828" stroke-width="3"/><path d="M16 25l11-20" stroke="#f8d050" stroke-width="1"/><path d="M26.5 5.5l1.5-3" stroke="#5a3a6a" stroke-width="3"/></svg>
<svg class="a" style="left:1253px;top:877px" width="8" height="5" viewBox="0 0 8 5"><path d="M0 5l4-4.5 4 4.5z" fill="#101820"/></svg>
<svg class="a" style="left:1273px;top:872px" width="17" height="17" viewBox="0 0 17 17"><path d="M1.5 1v15" stroke="#f8f8f8" stroke-width="1.5" /><path d="M1.5 1v15" stroke="#303030" stroke-width=".5"/><path d="M2 1.5q4-1 6 0.5t6 0v7q-3 1-6-0.5t-6 0z" fill="#f4f4f4" stroke="#606060" stroke-width=".6"/><circle cx="11.5" cy="12" r="4" fill="#e04040" stroke="#fff"/><path d="M9.8 10.3l3.4 3.4M13.2 10.3l-3.4 3.4" stroke="#fff" stroke-width="1.2"/></svg>
<svg class="a" style="left:1297px;top:872px" width="15" height="15" viewBox="0 0 15 15"><circle cx="7.5" cy="7.5" r="7.3" fill="#d8121a"/><path d="M3.5 11v-6l4 4 4-4v6" fill="none" stroke="#fff" stroke-width="1.8"/></svg>
<svg class="a" style="left:1321px;top:872px" width="17" height="17" viewBox="0 0 17 17"><path d="M1.5 1.5h4v5h-4zM3.5 6.5v9M7 4.5h8v7h-8zM11 11.5v3M8 15h6" fill="none" stroke="#1a3a4a" stroke-width="2.4"/><path d="M1.5 1.5h4v5h-4zM3.5 6.5v9M7 4.5h8v7h-8zM11 11.5v3M8 15h6" fill="none" stroke="#f8f8f8" stroke-width="1.3"/></svg>
<svg class="a" style="left:1345px;top:872px" width="17" height="17" viewBox="0 0 17 17"><path d="M1 6h3l4-4v13l-4-4h-3z" fill="#f4f4f4" stroke="#506070" stroke-width=".6"/><path d="M10 5q2 3 0 6M12 3q4 5 0 10M14 1.5q5 6.5 0 13" fill="none" stroke="#f4f4f4" stroke-width="1.2"/></svg>
<div class="a" style="left:1380px;top:866px;width:40px;text-align:center;font-size:11px;color:#0a1a2a;white-space:pre">00:10</div>
<div class="a" style="left:1370px;top:882px;width:60px;text-align:center;font-size:11px;color:#0a1a2a;white-space:pre">31.10.2019</div>
</body></html>
